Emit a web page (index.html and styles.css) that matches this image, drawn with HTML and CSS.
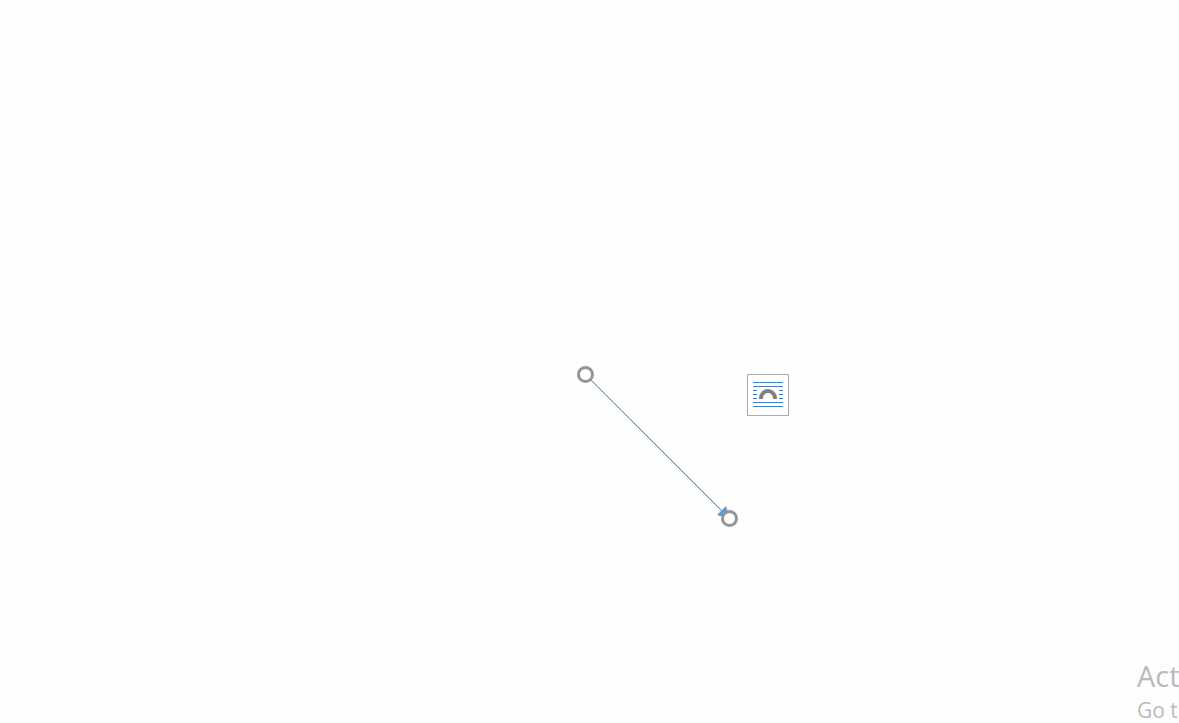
FILE: index.html
```html
<!DOCTYPE html>
<html lang="en">
<head>
<meta charset="utf-8">
<title>Document</title>
<link rel="stylesheet" href="styles.css">
</head>
<body>
<main class="canvas">
  <svg class="connector" width="160" height="160" viewBox="0 0 160 160" aria-hidden="true">
    <path d="M8 7.4 L147.6 147 L147 147.6 L7.4 8 Z" fill="#2f86d4"/>
    <path d="M153 153 L140 149 L149 140 Z" fill="#5b9bd5"/>
  </svg>
  <button class="handle handle-start" type="button" aria-label="Line start"></button>
  <button class="handle handle-end" type="button" aria-label="Line end"></button>
  <button class="layout-options" type="button" aria-label="Layout Options">
    <svg width="30" height="26" viewBox="0 0 30 26" aria-hidden="true">
      <path d="M0 .5H30M0 4.5H30M0 8.5H4M26 8.5H30M0 12.5H4M26 12.5H30M0 16.5H4M26 16.5H30M0 20.5H30M0 24.5H30" stroke="#3f7fc1"/>
      <path d="M8 17v-1a7 7 0 0 1 14 0v1" fill="none" stroke="#808080" stroke-width="4"/>
    </svg>
  </button>
  <aside class="watermark">
    <p class="watermark-title">Act</p>
    <p class="watermark-text">Go t</p>
  </aside>
</main>
</body>
</html>
```
FILE: styles.css
```css
body {
  margin: 0;
  background: #fefefe;
  font-family: "Open Sans", "Noto Sans", sans-serif;
}

.canvas {
  position: relative;
  min-height: 100vh;
  overflow: hidden;
}

.connector {
  position: absolute;
  left: 577px;
  top: 366px;
}

.handle {
  position: absolute;
  box-sizing: border-box;
  width: 17px;
  height: 17px;
  padding: 0;
  border: 3px solid #949494;
  border-radius: 50%;
  background: #fff;
}

.handle-start {
  left: 577px;
  top: 366px;
}

.handle-end {
  left: 721px;
  top: 510px;
}

.layout-options {
  position: absolute;
  left: 747px;
  top: 374px;
  display: flex;
  align-items: center;
  justify-content: center;
  box-sizing: border-box;
  width: 42px;
  height: 42px;
  padding: 0;
  border: 1px solid #ababab;
  background: #fff;
}

.watermark {
  position: absolute;
  right: 0;
  bottom: 0;
  width: 42px;
  color: #bababa;
  white-space: nowrap;
}

.watermark p {
  margin: 0;
}

.watermark-title {
  font-size: 29px;
  line-height: 42px;
}

.watermark-text {
  font-size: 21px;
  line-height: 26px;
}
```
